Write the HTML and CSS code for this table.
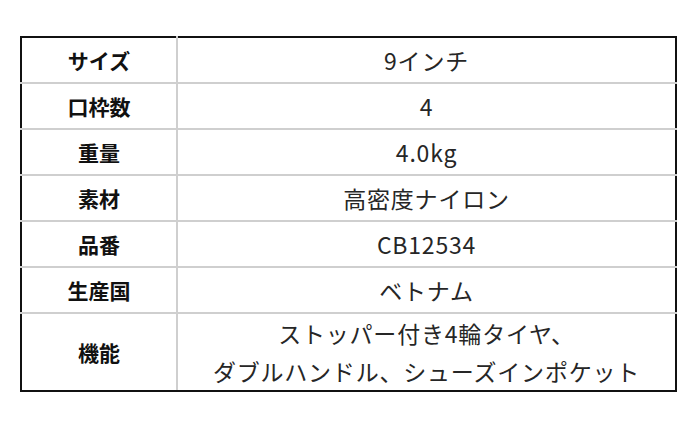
FILE: index.html
```html
<!DOCTYPE html>
<html lang="ja">
<head>
<meta charset="utf-8">
<link rel="stylesheet" href="styles.css">
</head>
<body>
<table class="spec">
  <tr><th>サイズ</th><td>9インチ</td></tr>
  <tr><th>口枠数</th><td>4</td></tr>
  <tr><th>重量</th><td>4.0kg</td></tr>
  <tr><th>素材</th><td>高密度ナイロン</td></tr>
  <tr><th>品番</th><td>CB12534</td></tr>
  <tr><th>生産国</th><td>ベトナム</td></tr>
  <tr class="tall"><th>機能</th><td>ストッパー付き4輪タイヤ、<br>ダブルハンドル、シューズインポケット</td></tr>
</table>
</body>
</html>
```
FILE: styles.css
```css
html, body {
  margin: 0;
  background: #fff;
}
body {
  padding: 36px 0 0 20px;
  font-family: "Noto Sans CJK JP", "Noto Sans", sans-serif;
  color: #111;
}
.spec {
  border-collapse: collapse;
  width: 657px;
  border: 2px solid #111;
  table-layout: fixed;
}
.spec th, .spec td {
  border: 2px solid #cfcfcf;
  height: 44px;
  padding: 0;
  text-align: center;
  vertical-align: middle;
}
.spec th {
  width: 154px;
  font-weight: bold;
  font-size: 21px;
  line-height: 30px;
  color: #111;
}
.spec td {
  font-weight: normal;
  font-size: 23px;
  letter-spacing: 0.8px;
  line-height: 30px;
  color: #262626;
}
.spec tr:first-child th, .spec tr:first-child td { border-top-color: #111; }
.spec tr:last-child th, .spec tr:last-child td { border-bottom-color: #111; }
.spec th { border-left-color: #111; }
.spec td { border-right-color: #111; }
.spec .tall th, .spec .tall td {
  height: 76px;
}
.spec .tall td {
  line-height: 38px;
}
```
